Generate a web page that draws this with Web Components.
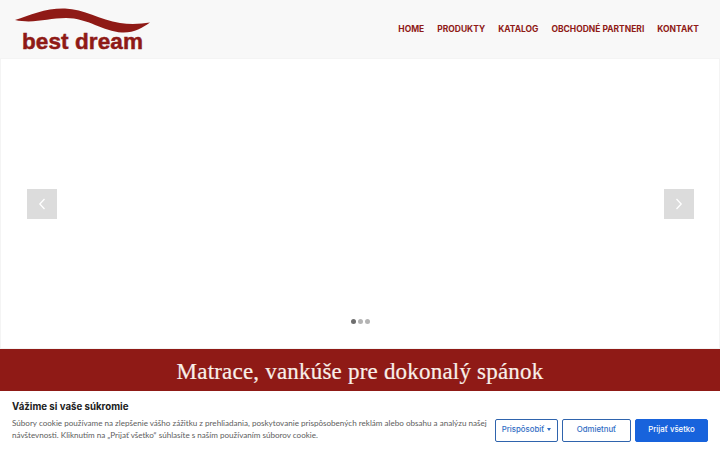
<!DOCTYPE html>
<html lang="sk"><head><meta charset="utf-8"><title>Best Dream</title>
<style>
html,body{margin:0;padding:0;width:720px;height:450px;overflow:hidden;background:#fff;font-family:"Inter","Open Sans",sans-serif}
</style></head><body>
<bd-page>
  <bd-header></bd-header>
  <bd-hero></bd-hero>
  <bd-band>Matrace, vankúše pre dokonalý spánok</bd-band>
</bd-page>
<bd-cookie></bd-cookie>
<script>
function def(name,html){customElements.define(name,class extends HTMLElement{constructor(){super();this.attachShadow({mode:'open'}).innerHTML=html}})}
def('bd-page',`<style>:host{display:flex;flex-direction:column;width:720px;height:450px;overflow:hidden}</style><slot></slot>`);
def('bd-header',`<style>
:host{display:flex;align-items:center;justify-content:space-between;height:58px;background:#f8f8f8;padding:0 21px 0 0;box-sizing:border-box}
.logo{display:block;position:relative;width:160px;height:58px;flex:none}
svg{position:absolute;left:0;top:0}
.t{position:absolute;left:22px;top:29px;font:700 22.500px/26px "Liberation Sans",sans-serif;color:#8f1a16;white-space:nowrap;letter-spacing:.1px;-webkit-text-stroke:.5px #8f1a16}
nav{display:flex;gap:13px;font:700 8.480px/12px "Inter",sans-serif;color:#8f1a16}
nav a{white-space:nowrap}
</style>
<div class="logo"><svg width="160" height="58" viewBox="0 0 160 58"><path fill="#8f1a16" d="M15 20C30 15 46 8 65 8.500C84 9 100 20 120 23C130 24.500 141 24 150 22.500C142 28 134 33 122 32.500C103 31.500 88 18 66 18C48 18 34 24 15 20Z"/></svg><span class="t">best dream</span></div>
<nav><a>HOME</a><a>PRODUKTY</a><a>KATALOG</a><a>OBCHODNÉ PARTNERI</a><a>KONTAKT</a></nav>`);
def('bd-hero',`<style>
:host{display:block;position:relative;height:291px;flex:none;background:#fff;box-shadow:inset 0 0 0 1px #f4f4f4}
.a{position:absolute;top:131px;width:30px;height:30px;background:#dcdcdc;display:flex;align-items:center;justify-content:center}
.l{left:26.500px}.r{right:26px}
.dots{position:absolute;left:351px;top:261px;display:flex;gap:2px}
.dots i{width:5px;height:5px;border-radius:50%;background:#b4b4b4}
.dots i:first-child{background:#6e6e6e}
</style>
<div class="a l"><svg width="10" height="14" viewBox="0 0 10 14"><path d="M7.500 2L2.800 7l4.700 5" fill="none" stroke="#fff" stroke-width="1.300"/></svg></div>
<div class="a r"><svg width="10" height="14" viewBox="0 0 10 14"><path d="M2.500 2l4.700 5-4.700 5" fill="none" stroke="#fff" stroke-width="1.300"/></svg></div>
<div class="dots"><i></i><i></i><i></i></div>`);
def('bd-band',`<style>
:host{display:flex;justify-content:center;align-items:center;height:42px;box-sizing:border-box;padding-top:3px;flex:none;background:#8f1a16;color:#f8efe9;font:400 23px/30px "Liberation Serif",serif;letter-spacing:.2px;white-space:nowrap;-webkit-text-stroke:.2px #f8efe9}
</style><slot></slot>`);
def('bd-cookie',`<style>
:host{display:flex;position:fixed;left:0;right:0;bottom:0;height:59px;background:#fff;box-sizing:border-box;padding:0 12px;align-items:flex-start;justify-content:space-between;font-family:"Inter",sans-serif}
h2{margin:9px 0 0;font:700 9.700px/14px "Inter",sans-serif;color:#212121}
p{margin:2.500px 0 0;font:400 8.080px/12.500px "Lato",sans-serif;color:#5e5e5e;width:478px}
.b{display:flex;gap:4px;margin-top:27.500px}
button{box-sizing:border-box;height:23px;border-radius:2px;border:1.500px solid #2f64ad;background:#fff;color:#2f6cc4;font:500 7.800px/1 "Inter",sans-serif;padding:0;white-space:nowrap}
.c{width:63px}.o{width:69px}.p{width:73px;background:#1863dc;border-color:#1863dc;color:#fff}
.c::after{content:"";display:inline-block;margin-left:3px;vertical-align:1px;border:2.500px solid transparent;border-top:3px solid #2f6cc4;border-bottom:0}
</style>
<div class="m"><h2>Vážime si vaše súkromie</h2><p>Súbory cookie používame na zlepšenie vášho zážitku z prehliadania, poskytovanie prispôsobených reklám alebo obsahu a analýzu našej návštevnosti. Kliknutím na „Prijať všetko“ súhlasíte s naším používaním súborov cookie.</p></div>
<div class="b"><button class="c">Prispôsobiť</button><button class="o">Odmietnuť</button><button class="p">Prijať všetko</button></div>`);
</script>
</body></html>
